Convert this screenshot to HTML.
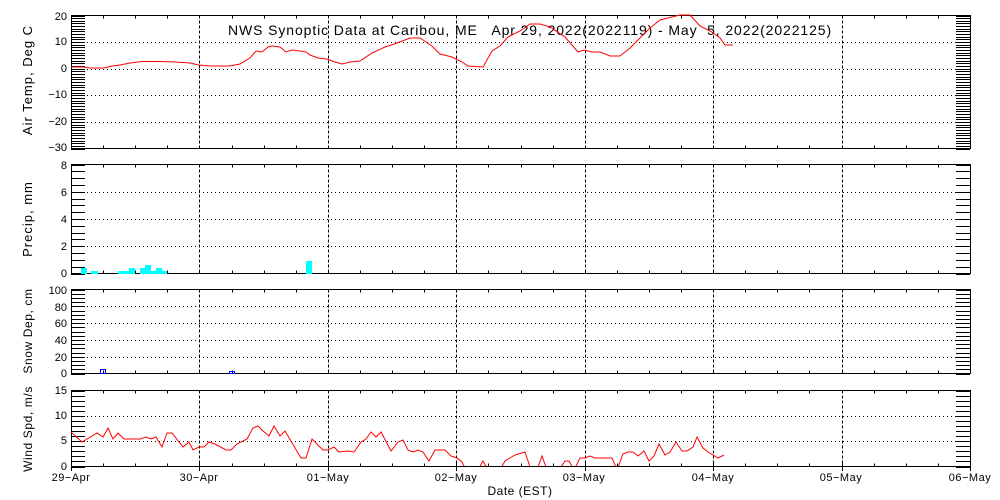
<!DOCTYPE html>
<html><head><meta charset="utf-8"><style>
html,body{margin:0;padding:0;background:#fff;width:1000px;height:500px;overflow:hidden}
svg{display:block}
text{font-family:"Liberation Sans",sans-serif;fill:#000}
</style></head><body>
<svg id="s" width="1000" height="500" xmlns="http://www.w3.org/2000/svg" shape-rendering="crispEdges">
<g id="g"></g>
<text x="530" y="35" font-size="14" letter-spacing="0.9" text-anchor="middle" xml:space="preserve">NWS Synoptic Data at Caribou, ME   Apr 29, 2022(2022119) - May  5, 2022(2022125)</text>
<g font-size="11" text-anchor="end">
<text x="67" y="20">20</text><text x="67" y="45">10</text><text x="67" y="72">0</text><text x="67" y="98">−10</text><text x="67" y="125">−20</text><text x="67" y="151">−30</text>
<text x="67" y="169">8</text><text x="67" y="196">6</text><text x="67" y="223">4</text><text x="67" y="250">2</text><text x="67" y="277">0</text>
<text x="67" y="294">100</text><text x="67" y="311">80</text><text x="67" y="327">60</text><text x="67" y="344">40</text><text x="67" y="361">20</text><text x="67" y="377">0</text>
<text x="67" y="394">15</text><text x="67" y="419">10</text><text x="67" y="444">5</text><text x="67" y="470">0</text>
</g>
<g font-size="11" letter-spacing="0.5" text-anchor="middle">
<text x="71" y="481">29−Apr</text><text x="199" y="481">30−Apr</text><text x="328" y="481">01−May</text><text x="456" y="481">02−May</text><text x="584" y="481">03−May</text><text x="713" y="481">04−May</text><text x="841" y="481">05−May</text><text x="970" y="481">06−May</text>
<text x="520" y="495" font-size="12">Date (EST)</text>
</g>
<g font-size="13" letter-spacing="1" text-anchor="middle">
<text transform="translate(32,80) rotate(-90)">Air Temp, Deg C</text>
<text transform="translate(32,219) rotate(-90)">Precip, mm</text>
</g>
<g font-size="12" letter-spacing="0.6" text-anchor="middle">
<text transform="translate(32,331) rotate(-90)">Snow Dep, cm</text>
<text transform="translate(32,429) rotate(-90)">Wind Spd, m/s</text>
</g>
<g fill="#00ffff">
<rect x="81" y="268" width="6" height="6"/><rect x="91" y="271" width="7" height="3"/><rect x="118" y="271" width="11" height="3"/><rect x="129" y="268" width="6" height="6"/><rect x="140" y="268" width="5" height="6"/><rect x="145" y="265" width="6" height="9"/><rect x="151" y="271" width="5" height="3"/><rect x="156" y="268" width="6" height="6"/><rect x="162" y="271" width="5" height="3"/><rect x="306" y="261" width="6" height="13"/>
</g>
<g fill="none" stroke="#0000ff"><rect x="100.5" y="369.5" width="5" height="4"/><rect x="229.5" y="371.5" width="5" height="2"/></g>
<defs><clipPath id="c4"><rect x="71" y="390" width="899" height="76"/></clipPath></defs>
<polyline fill="none" stroke="#f00" shape-rendering="auto" points="71,67 84,67 90,68 104,68 112,66 120,65 130,63 142,61.5 160,61.5 175,62 190,63 199,65 210,66 230,66 240,64 250,58 256,51 262,52 268,47 272,46 280,47 286,52 292,50 300,51 306,52 310,55 318,58 327,59 335,62 342,64 350,62 360,61 372,53 385,47 397,43 410,38 420,38 432,46 440,54 452,57 462,62 468,66 483,67 492,51 500,46 508,37 520,31 530,24 540,24 550,27 565,37 578,52 584,50 592,52 600,52 610,56 620,56 630,48 640,38 650,28 660,20 672,17 680,15 690,15 700,26 712,32 720,38 725,45 733,45"/>
<polyline clip-path="url(#c4)" fill="none" stroke="#f00" shape-rendering="auto" points="71,432 82,442 97,433 103,437 108,428 113,439 118,433 124,439 140,439 146,437 151,439 156,437 162,447 167,433 172,433 183,447 189,442 193,450 199,447 204,447 209,442 215,444 226,450 231,450 237,444 247,439 253,428 258,426 263,431 269,436 274,426 280,436 285,431 301,458 306,458 312,439 323,450 328,450 334,447 339,452 348,451 354,452 361,442 366,439 371,432 376,437 381,432 391,451 398,442 403,440 408,450 413,452 418,450 423,452 429,461 435,450 445,450 451,456 457,458 462,462 466,470 478,470 483,461 488,470 500,470 505,461 510,458 515,455 525,452 531,470 537,470 542,456 547,470 559,470 565,461 569,461 574,470 580,458 585,458 590,456 595,458 612,458 617,470 623,454 628,452 633,452 638,456 644,451 649,461 654,456 659,444 665,455 670,452 676,442 682,451 687,451 693,447 697,437 703,448 708,452 713,455 718,458 724,455"/>
</svg>
<script>
(function(){
var g=document.getElementById('g'),o='';
function L(x1,y1,x2,y2,st){o+='<line x1="'+x1+'" y1="'+y1+'" x2="'+x2+'" y2="'+y2+'" stroke="#000" '+(st||'')+'/>';}
var X0=71,X1=970,D=(X1-X0)/7;
var P=[[15.5,148.5,-30,20,1,[10,0,-10,-20]],[164.5,273.5,0,8,0.5,[2,4,6]],[289.5,373.5,0,100,5,[20,40,60,80]],[390.5,466.5,0,15,1,[5,10]]];
P.forEach(function(p){
 var t=p[0],b=p[1],mn=p[2],mx=p[3];
 function Y(v){return Math.round(b-(v-mn)/(mx-mn)*(b-t))+0.5;}
 for(var k=1;k<7;k++){var x=Math.round(X0+D*k)+0.5;L(x,t,x,b,'stroke-dasharray="3 2"');}
 p[5].forEach(function(v){var y=Y(v);L(X0,y,X1,y,'stroke-dasharray="1 3"');});
 for(var v=mn;v<=mx+1e-6;v+=p[4]){var y=Y(v);L(X0,y,X0+14,y);L(X1-14,y,X1,y);}
 for(var k=0;k<=28;k++){var x=Math.round(X0+D*k/4)+0.5;L(x,t,x,t+3);L(x,b,x,b-3);}
 o+='<rect x="'+(X0+0.5)+'" y="'+t+'" width="'+(X1-X0)+'" height="'+(b-t)+'" fill="none" stroke="#000"/>';
});
for(var k=0;k<=7;k++){var x=Math.round(X0+D*k)+0.5;L(x,466.5,x,471);}
g.innerHTML=o;
})();
</script>
</body></html>
